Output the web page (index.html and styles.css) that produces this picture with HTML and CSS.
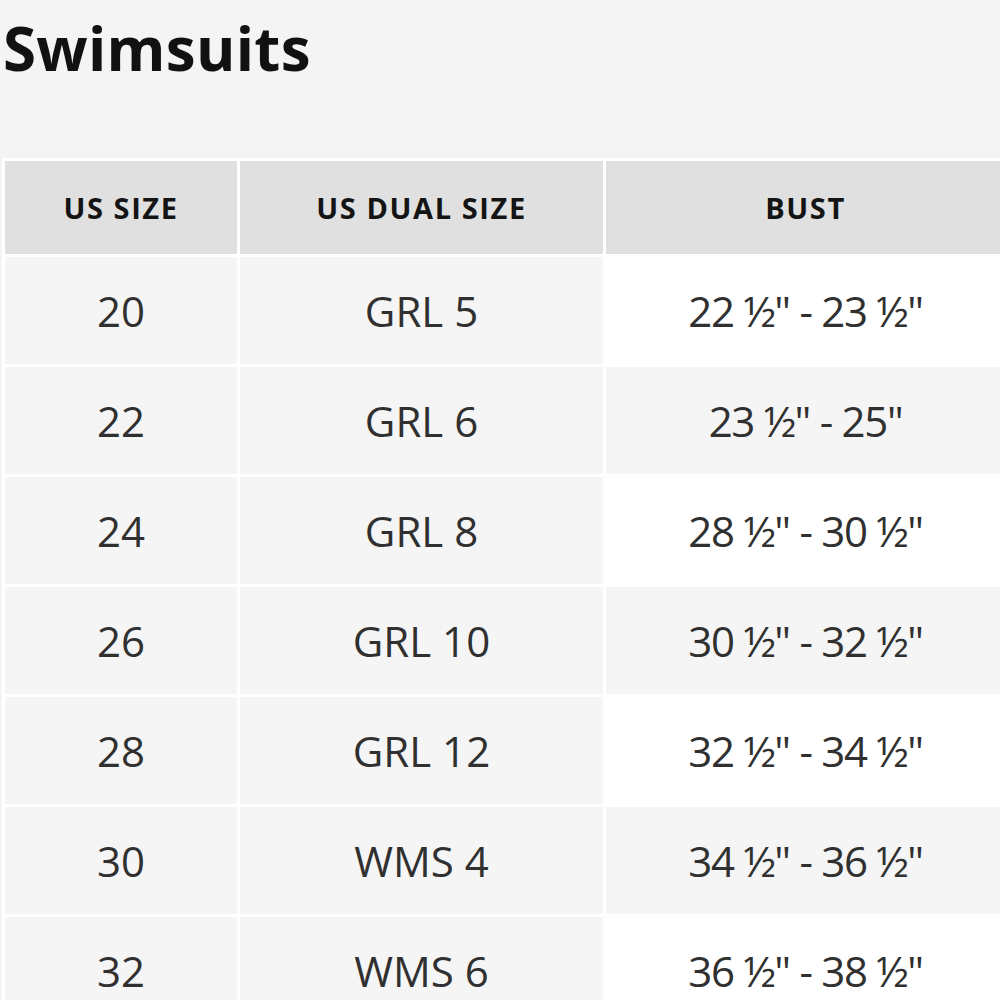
FILE: index.html
```html
<!DOCTYPE html>
<html lang="en">
<head>
<meta charset="utf-8">
<title>Swimsuits</title>
<link rel="stylesheet" href="styles.css">
</head>
<body>
<main class="page">
  <h1 class="title">Swimsuits</h1>
  <div class="table-wrap">
    <table class="size-table">
      <thead>
        <tr>
          <th class="c1">US SIZE</th>
          <th class="c2">US DUAL SIZE</th>
          <th class="c3">BUST</th>
        </tr>
      </thead>
      <tbody>
        <tr><td>20</td><td>GRL 5</td><td class="bust">22 ½" - 23 ½"</td></tr>
        <tr><td>22</td><td>GRL 6</td><td class="bust">23 ½" - 25"</td></tr>
        <tr><td>24</td><td>GRL 8</td><td class="bust">28 ½" - 30 ½"</td></tr>
        <tr><td>26</td><td>GRL 10</td><td class="bust">30 ½" - 32 ½"</td></tr>
        <tr><td>28</td><td>GRL 12</td><td class="bust">32 ½" - 34 ½"</td></tr>
        <tr><td>30</td><td>WMS 4</td><td class="bust">34 ½" - 36 ½"</td></tr>
        <tr><td>32</td><td>WMS 6</td><td class="bust">36 ½" - 38 ½"</td></tr>
      </tbody>
    </table>
  </div>
</main>
</body>
</html>
```
FILE: styles.css
```css
html, body {
  margin: 0;
  padding: 0;
  background: #f4f4f4;
  overflow: hidden;
}

.page {
  width: 1000px;
  height: 1000px;
  overflow: hidden;
  font-family: "Open Sans", "Liberation Sans", sans-serif;
}

.title {
  margin: 12px 0 0 3px;
  font-size: 60px;
  line-height: 72px;
  font-weight: 700;
  color: #111;
  letter-spacing: 0.3px;
}

.table-wrap {
  margin-top: 74px;
  margin-left: 2px;
  width: 998px;
  overflow: hidden;
}

.size-table {
  border-collapse: separate;
  border-spacing: 3px;
  background: #ffffff;
  table-layout: fixed;
  width: 1006px;
}

.size-table th,
.size-table td {
  padding: 0;
  text-align: center;
  vertical-align: middle;
}

.size-table .c1 { width: 232px; }
.size-table .c2 { width: 363px; }
.size-table .c3 { width: 399px; }

.size-table th {
  height: 93px;
  background: #e0e0e0;
  font-size: 29px;
  font-weight: 700;
  color: #141414;
  letter-spacing: 1.6px;
}

.size-table td {
  height: 107px;
  font-size: 42px;
  font-weight: 400;
  color: #303030;
  background: #f5f5f5;
}

.size-table td.bust {
  letter-spacing: -1.3px;
}

.size-table tbody tr:nth-child(odd) td.bust {
  background: #ffffff;
}
```
